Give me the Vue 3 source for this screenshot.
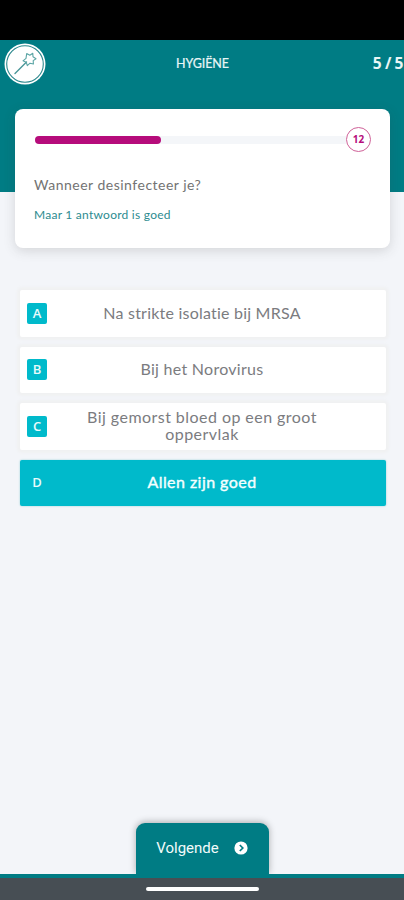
<script setup>
const options = [
  { letter: 'A', text: 'Na strikte isolatie bij MRSA', cls: 'a' },
  { letter: 'B', text: 'Bij het Norovirus', cls: 'b' },
  { letter: 'C', text: 'Bij gemorst bloed op een groot oppervlak', cls: 'c' },
  { letter: 'D', text: 'Allen zijn goed', cls: 'selected' },
]
const progress = 40.5
</script>

<template>
  <div class="screen">
    <div class="status"></div>
    <header class="top">
      <div class="bar">
        <svg class="logo" viewBox="0 0 42 42" fill="none">
          <circle cx="21" cy="21" r="20.5" fill="#fff" />
          <circle cx="21" cy="21" r="18.3" stroke="#2b878c" stroke-width="1.1" />
          <path d="M11 30.5 L22.5 19" stroke="#4a9799" stroke-width="1.4" stroke-linecap="round" />
          <path d="M22.7 10.6 L25.8 12.3 L28.8 10.3 L29 13.8 L32 15.7 L29.2 17.6 L29.4 21 L26 20.2 L23.3 22.6 L22.2 19.2 L19 17.8 L22 15.3 Z" stroke="#5ba5a5" stroke-width="1.1" stroke-linejoin="round" />
        </svg>
        <h1 class="title">HYGIËNE</h1>
        <div class="count">5 / 5</div>
      </div>
    </header>
    <section class="card">
      <div class="progress">
        <div class="track"><div class="fill" :style="{ width: progress + '%' }"></div></div>
        <div class="timer">12</div>
      </div>
      <p class="question">Wanneer desinfecteer je?</p>
      <p class="hint">Maar 1 antwoord is goed</p>
    </section>
    <main class="options">
      <button v-for="o in options" :key="o.letter" class="option" :class="o.cls">
        <span class="badge">{{ o.letter }}</span>
        <span class="label">{{ o.text }}</span>
      </button>
    </main>
    <footer class="bottom">
      <button class="next">
        <span>Volgende</span>
        <svg width="14" height="14" viewBox="0 0 14 14" fill="none">
          <circle cx="7" cy="7" r="6.6" fill="#fff" />
          <path d="M5.8 4 L8.8 7 L5.8 10" stroke="#007c84" stroke-width="1.7" />
        </svg>
      </button>
    </footer>
    <div class="system"><div class="pill"></div></div>
  </div>
</template>

<style>
body { margin: 0; background: #f3f5f9; }
</style>

<style scoped>
.screen { width: 404px; height: 900px; box-sizing: border-box; display: flex; flex-direction: column; background: #f3f5f9; font-family: Lato, "Open Sans", sans-serif; overflow: hidden; }
.status { height: 39.5px; background: #000; flex: none; }
.top { height: 152.5px; background: #007c84; flex: none; }
.bar { height: 49px; display: grid; grid-template-columns: 80px 1fr 80px; align-items: center; color: #e9f6f6; }
.logo { width: 42px; height: 42px; margin-left: 3.5px; }
.title { margin: 0; text-align: center; font-size: 12.5px; font-weight: 400; letter-spacing: -.1px; line-height: 16px; padding-left: 1px; -webkit-text-stroke: .2px; }
.count { text-align: right; font: 700 15.5px/20px "Open Sans", sans-serif; letter-spacing: -.4px; padding: 0 1px 2px 0; white-space: nowrap; }
.card { flex: none; box-sizing: border-box; width: 375px; height: 139.5px; margin: -83.5px 0 0 15px; padding: 18px 19px 0 20px; background: #fff; border-radius: 8px; box-shadow: 0 3px 12px rgba(60, 60, 60, .17); }
.progress { display: flex; align-items: center; height: 26px; }
.track { flex: 1; height: 8px; background: #f4f6f9; border-radius: 4px 0 0 4px; }
.fill { height: 8px; border-radius: 4px; background: #b60c7b; }
.timer { box-sizing: border-box; width: 25px; height: 25px; border: 1px solid #cf6198; border-radius: 50%; color: #b60c7b; font: 700 10px/23px "Open Sans", sans-serif; text-align: center; }
.question { margin: 22px 0 0 -1px; font-size: 14px; line-height: 20px; letter-spacing: .5px; color: #737373; white-space: nowrap; }
.hint { margin: 11px 0 0 -1px; font-size: 12px; line-height: 18px; letter-spacing: .25px; color: #2d8b90; white-space: nowrap; }
.options { display: flex; flex-direction: column; gap: 10px; margin: 42px 18px 0 20px; }
.option { position: relative; display: flex; align-items: center; justify-content: center; box-sizing: border-box; width: 366px; height: 46.5px; padding: 0 50px 2px 48px; border: 0; border-radius: 2px; background: #fff; box-shadow: 0 0 3px 3px #f0f1f2; font: 400 16px/17px Lato, sans-serif; color: #7b7c7f; }
.badge { position: absolute; left: 7px; top: 12.5px; width: 20px; height: 21px; border-radius: 2px; background: #00bacb; color: #e9fafb; font: 600 13px/20px "Open Sans", sans-serif; text-align: center; }
.label { letter-spacing: .45px; }
.a .label { letter-spacing: .22px; }
.b .label { letter-spacing: .28px; }
.c { padding-bottom: 3px; }
.selected { background: #00bacb; color: #f4ffff; box-shadow: 0 0 2px #8ccdd4; }
.selected .label { -webkit-text-stroke: .4px; }
.bottom { display: flex; justify-content: center; align-items: flex-end; margin-top: auto; border-bottom: 4px solid #007c84; height: 51px; flex: none; }
.next { display: flex; align-items: center; justify-content: center; gap: 15px; box-sizing: border-box; width: 133px; height: 51px; margin-left: 1px; padding: 0 1px 2px 0; border: 0; border-radius: 9px 9px 0 0; background: #007c84; box-shadow: 0 -1px 7px rgba(0, 0, 0, .3); clip-path: inset(-12px -12px 0 -12px); color: #f2fbfb; font: 400 15px/20px Roboto, "Noto Sans", sans-serif; }
.system { height: 22px; background: #474e54; display: flex; justify-content: center; flex: none; }
.pill { width: 113px; height: 4.5px; margin: 8.5px 0 0 1px; border-radius: 3px; background: #fff; }
</style>
